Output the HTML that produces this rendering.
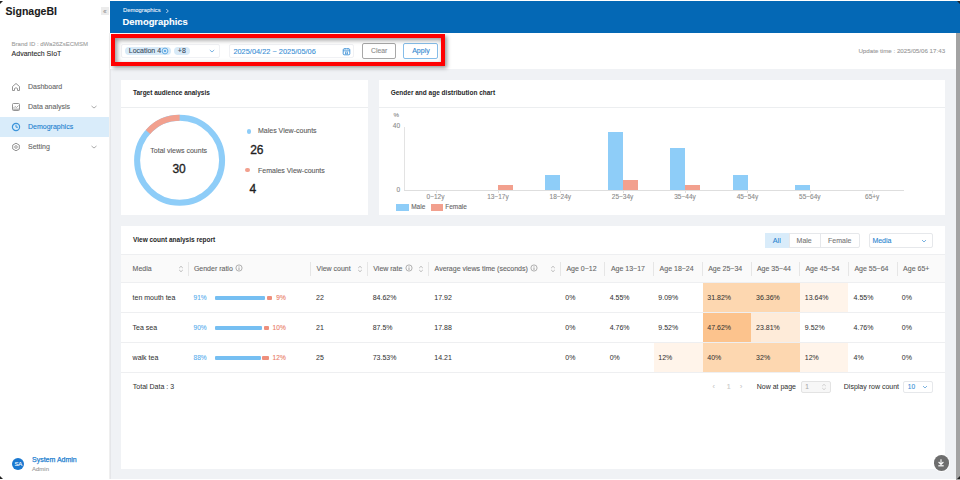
<!DOCTYPE html>
<html><head><meta charset="utf-8">
<style>
*{margin:0;padding:0;box-sizing:border-box}
html,body{width:960px;height:480px;overflow:hidden;background:#fff;font-family:"Liberation Sans",sans-serif}
.a{position:absolute}
.t{position:absolute;line-height:1;white-space:nowrap;-webkit-text-stroke-width:0.1px}
#side{left:0;top:0;width:110px;height:480px;background:#fff}
#hdr{left:110px;top:1px;width:850px;height:32px;background:#0468b5}
#filt{left:110px;top:33px;width:846px;height:36px;background:#fff}
#main{left:110px;top:69px;width:846px;height:410px;background:#f0f2f5}
#sb{left:956px;top:33px;width:4px;height:447px;background:#a3a3a3}
.card{position:absolute;background:#fff}
.hd{position:absolute;left:0;right:0;height:1px;background:#eceef0}
.ttl{font-size:6.5px;font-weight:bold;color:#262626;-webkit-text-stroke-width:0 !important}
.nav{font-size:7px;color:#666}
.g7{font-size:7px;color:#595959}
.th{font-size:7px;color:#666}
.td{font-size:7px;color:#333;-webkit-text-stroke-width:0.04px !important}
.line{position:absolute;height:1px;background:#eeeff1}
.vd{position:absolute;width:1px;background:#e8e8e8}
</style></head><body>

<!-- sidebar -->
<div id="side" class="a"></div>
<div class="a" style="left:109px;top:33px;width:1px;height:446px;background:#e6e7ea"></div>
<div class="t" style="left:5.6px;top:5.5px;font-size:10.5px;font-weight:bold;color:#1a1a1a">SignageBI</div>
<div class="a" style="left:101px;top:7px;width:8px;height:8px;background:#ececec"></div>
<div class="t" style="left:103px;top:7.5px;font-size:7px;color:#9a9a9a;letter-spacing:-1px">&lsaquo;&lsaquo;</div>
<div class="t" style="left:11.6px;top:40.6px;font-size:6px;color:#a0a0a0">Brand ID : dWa26ZsECMSM</div>
<div class="t" style="left:11.6px;top:49.9px;font-size:7px;color:#2a2a2a">Advantech SIoT</div>

<div class="a" style="left:0;top:117px;width:109px;height:20px;background:#d9ecfa"></div>
<div class="t nav" style="left:28px;top:83.2px">Dashboard</div>
<div class="t nav" style="left:28px;top:103.2px">Data analysis</div>
<div class="t nav" style="left:28px;top:123.2px;color:#2180cf">Demographics</div>
<div class="t nav" style="left:28px;top:143.2px">Setting</div>
<!-- icons -->
<svg class="a" style="left:11px;top:82px" width="10" height="10" viewBox="0 0 10 10"><path d="M1.5 8.5 V4.5 L5 1.5 L8.5 4.5 V8.5 H6.5 V6.5 Q5 5 3.5 6.5 V8.5 Z" fill="none" stroke="#8a8a8a" stroke-width="0.9" stroke-linejoin="round"/></svg>
<svg class="a" style="left:11px;top:102px" width="10" height="10" viewBox="0 0 10 10"><rect x="1.5" y="1.5" width="7" height="7" rx="1" fill="none" stroke="#888" stroke-width="0.9"/><path d="M2.5 6 L4 4.5 L5.5 5.5 L7.5 3.5" fill="none" stroke="#888" stroke-width="0.7"/><rect x="2" y="6.5" width="6" height="1.5" fill="#bbb"/></svg>
<svg class="a" style="left:11px;top:122px" width="10" height="10" viewBox="0 0 10 10"><circle cx="5" cy="5" r="3.6" fill="none" stroke="#3d95da" stroke-width="1.2"/><path d="M5 2.8 V5.2 H7" fill="none" stroke="#3d95da" stroke-width="1"/></svg>
<svg class="a" style="left:11px;top:142px" width="10" height="10" viewBox="0 0 10 10"><path d="M5 1.2 L8.3 3.1 V6.9 L5 8.8 L1.7 6.9 V3.1 Z" fill="none" stroke="#888" stroke-width="0.9" stroke-linejoin="round"/><circle cx="5" cy="5" r="1.3" fill="none" stroke="#888" stroke-width="0.8"/></svg>
<svg class="a" style="left:90px;top:104px" width="8" height="6" viewBox="0 0 8 6"><path d="M1.5 2 L4 4 L6.5 2" fill="none" stroke="#888" stroke-width="0.7"/></svg>
<svg class="a" style="left:90px;top:144px" width="8" height="6" viewBox="0 0 8 6"><path d="M1.5 2 L4 4 L6.5 2" fill="none" stroke="#888" stroke-width="0.7"/></svg>

<div class="a" style="left:12px;top:458px;width:12.4px;height:12.4px;border-radius:50%;background:#1a78d0"></div>
<div class="t" style="left:12px;top:461.3px;width:12.4px;text-align:center;font-size:6px;color:#fff;letter-spacing:-0.4px">SA</div>
<div class="t" style="left:32px;top:455.8px;font-size:7px;color:#1f7fd0;-webkit-text-stroke-width:0.25px">System Admin</div>
<div class="t" style="left:32px;top:465.8px;font-size:6px;color:#999">Admin</div>

<!-- header -->
<div id="hdr" class="a"></div>
<div class="t" style="left:123px;top:7.6px;font-size:5.85px;color:#e8f1fa">Demographics</div>
<svg class="a" style="left:165px;top:8px" width="5" height="6" viewBox="0 0 5 6"><path d="M1.3 1 L3.3 3 L1.3 5" fill="none" stroke="#e8f1fa" stroke-width="0.8"/></svg>
<div class="t" style="left:122.6px;top:17.4px;font-size:9.4px;font-weight:bold;color:#fff">Demographics</div>

<div id="filt" class="a"></div>
<div id="main" class="a"></div>
<div id="sb" class="a"></div>
<div class="a" style="left:109px;top:33px;width:1px;height:446px;background:#efefef"></div>
<div class="a" style="left:110px;top:69px;width:1px;height:410px;background:#e5e6e9"></div>
<div class="a" style="left:0;top:1px;width:3px;height:3px;background:#222;clip-path:polygon(0 0,100% 0,0 100%)"></div>
<div class="a" style="left:957px;top:1px;width:3px;height:3px;background:#222;clip-path:polygon(0 0,100% 0,100% 100%)"></div>
<div class="a" style="left:0;top:476px;width:3px;height:3px;background:#222;clip-path:polygon(0 0,0 100%,100% 100%)"></div>
<div class="a" style="left:957px;top:476px;width:3px;height:3px;background:#222;clip-path:polygon(100% 0,100% 100%,0 100%)"></div>


<!-- filter bar -->
<div class="t" style="left:858.4px;top:48px;font-size:6.2px;color:#999">Update time : 2025/05/06 17:43</div>
<div class="a" style="left:121px;top:44px;width:99px;height:14px;border:1px solid #f0f1f4;border-radius:2px;background:#fff"></div>
<div class="a" style="left:125px;top:47px;width:46px;height:8px;border-radius:4px;background:#d8eaf8"></div>
<div class="t" style="left:128.8px;top:47.3px;font-size:7px;color:#3a4a5c">Location 4</div>
<svg class="a" style="left:161px;top:47px" width="8" height="8" viewBox="0 0 8 8"><circle cx="4" cy="4" r="2.9" fill="none" stroke="#4a9ee0" stroke-width="0.8"/><circle cx="4" cy="4" r="1.1" fill="#4a9ee0"/></svg>
<div class="a" style="left:174px;top:47px;width:15.5px;height:8px;border-radius:4px;background:#d8eaf8"></div>
<div class="t" style="left:177.8px;top:47.3px;font-size:7px;color:#3a4a5c">+8</div>
<svg class="a" style="left:208px;top:48px" width="8" height="6" viewBox="0 0 8 6"><path d="M1.8 2 L4 4 L6.2 2" fill="none" stroke="#5a9fd8" stroke-width="0.8"/></svg>
<div class="a" style="left:229px;top:44px;width:125px;height:14px;border:1px solid #f0f1f4;border-radius:2px;background:#fff"></div>
<div class="t" style="left:233.4px;top:47.8px;font-size:7.4px;color:#3a8fd6">2025/04/22 ~ 2025/05/06</div>
<svg class="a" style="left:342px;top:46.5px" width="9" height="9" viewBox="0 0 9 9"><rect x="1.2" y="1.8" width="6.6" height="6" rx="1" fill="none" stroke="#3a8fd6" stroke-width="0.9"/><path d="M1.2 3.8 H7.8 M3 1 V2.5 M6 1 V2.5" stroke="#3a8fd6" stroke-width="0.8"/><rect x="3.3" y="5" width="2.4" height="1.8" fill="none" stroke="#3a8fd6" stroke-width="0.6"/></svg>
<div class="a" style="left:362.3px;top:43.3px;width:33.6px;height:15.4px;border:1px solid #a8a8a8;border-radius:2px;background:#fff"></div>
<div class="t" style="left:371px;top:48px;font-size:6.8px;color:#8a8a8a">Clear</div>
<div class="a" style="left:403.3px;top:43.3px;width:35.2px;height:15.4px;border:1px solid #86bde9;border-radius:2px;background:#fff"></div>
<div class="t" style="left:412.2px;top:47.3px;font-size:7px;color:#2d86cf">Apply</div>
<!-- red highlight box -->
<div class="a" style="left:111px;top:34px;width:334px;height:32px;border:4px solid #ff0000;box-shadow:2px 2px 4px rgba(0,0,0,0.4), inset 2px 2px 5px rgba(0,0,0,0.42)"></div>

<!-- card 1 -->
<div class="card" style="left:121px;top:80px;width:247px;height:135px"></div>
<div class="hd" style="left:121px;top:107px;width:247px;right:auto"></div>
<div class="t ttl" style="left:133px;top:90.4px">Target audience analysis</div>
<svg class="a" style="left:129px;top:110px" width="102" height="102" viewBox="0 0 102 102">
<circle cx="50.6" cy="50.3" r="42.5" fill="none" stroke="#8ecdf8" stroke-width="6"/>
<path d="M50.6 7.8 A42.5 42.5 0 0 0 19 21.9" fill="none" stroke="#f2a08e" stroke-width="6"/>
</svg>
<div class="t" style="left:150.3px;top:147px;font-size:7px;color:#5a5a5a">Total views counts</div>
<div class="t" style="left:172.4px;top:163px;font-size:12px;color:#1f1f1f;-webkit-text-stroke:0.35px #1f1f1f">30</div>
<div class="a" style="left:246.9px;top:129px;width:4.6px;height:4.6px;border-radius:50%;background:#8ecdf8"></div>
<div class="t" style="left:258px;top:127.4px;font-size:7px;color:#5a5a5a">Males View-counts</div>
<div class="t" style="left:250.2px;top:144px;font-size:12px;color:#1f1f1f;-webkit-text-stroke:0.35px #1f1f1f">26</div>
<div class="a" style="left:245px;top:167.6px;width:4.8px;height:4.8px;border-radius:50%;background:#f2a08e"></div>
<div class="t" style="left:258px;top:166.6px;font-size:7px;color:#5a5a5a">Females View-counts</div>
<div class="t" style="left:249.6px;top:183px;font-size:12px;color:#1f1f1f;-webkit-text-stroke:0.35px #1f1f1f">4</div>

<!-- card 2 -->
<div class="card" style="left:379px;top:80px;width:566px;height:135px"></div>
<div class="hd" style="left:379px;top:107px;width:566px;right:auto"></div>
<div class="t ttl" style="left:390.7px;top:90.4px">Gender and age distribution chart</div>
<div class="t" style="left:393.6px;top:112.4px;font-size:6.2px;color:#8a8a8a">%</div>
<div class="t" style="left:392.8px;top:123px;font-size:6.5px;color:#8a8a8a">40</div>
<div class="t" style="left:396.6px;top:187px;font-size:6.5px;color:#8a8a8a">0</div>
<div class="a" style="left:404px;top:126.5px;width:1px;height:64px;background:#e3e3e3"></div>
<div class="a" style="left:404px;top:190px;width:500px;height:1px;background:#dedede"></div>
<div class="a" style="left:545.4px;top:174.8px;width:15px;height:15.5px;background:#8ecdf8"></div>
<div class="a" style="left:607.8px;top:132.3px;width:15px;height:58.0px;background:#8ecdf8"></div>
<div class="a" style="left:670.1px;top:148.1px;width:15px;height:42.2px;background:#8ecdf8"></div>
<div class="a" style="left:732.9px;top:174.8px;width:15px;height:15.5px;background:#8ecdf8"></div>
<div class="a" style="left:795.2px;top:185.3px;width:15px;height:5.0px;background:#8ecdf8"></div>
<div class="a" style="left:498.3px;top:185.3px;width:15px;height:5.0px;background:#f2a08e"></div>
<div class="a" style="left:622.6px;top:180.0px;width:15px;height:10.3px;background:#f2a08e"></div>
<div class="a" style="left:685.0px;top:185.3px;width:15px;height:5.0px;background:#f2a08e"></div>
<div class="t" style="left:405.5px;top:194px;width:60px;text-align:center;font-size:6.5px;color:#8a8a8a">0~12y</div>
<div class="a" style="left:435.5px;top:190.5px;width:1px;height:2px;background:#e0e0e0"></div>
<div class="t" style="left:467.9px;top:194px;width:60px;text-align:center;font-size:6.5px;color:#8a8a8a">13~17y</div>
<div class="a" style="left:497.9px;top:190.5px;width:1px;height:2px;background:#e0e0e0"></div>
<div class="t" style="left:530.3px;top:194px;width:60px;text-align:center;font-size:6.5px;color:#8a8a8a">18~24y</div>
<div class="a" style="left:560.3px;top:190.5px;width:1px;height:2px;background:#e0e0e0"></div>
<div class="t" style="left:592.6px;top:194px;width:60px;text-align:center;font-size:6.5px;color:#8a8a8a">25~34y</div>
<div class="a" style="left:622.6px;top:190.5px;width:1px;height:2px;background:#e0e0e0"></div>
<div class="t" style="left:655.0px;top:194px;width:60px;text-align:center;font-size:6.5px;color:#8a8a8a">35~44y</div>
<div class="a" style="left:685.0px;top:190.5px;width:1px;height:2px;background:#e0e0e0"></div>
<div class="t" style="left:717.4px;top:194px;width:60px;text-align:center;font-size:6.5px;color:#8a8a8a">45~54y</div>
<div class="a" style="left:747.4px;top:190.5px;width:1px;height:2px;background:#e0e0e0"></div>
<div class="t" style="left:779.8px;top:194px;width:60px;text-align:center;font-size:6.5px;color:#8a8a8a">55~64y</div>
<div class="a" style="left:809.8px;top:190.5px;width:1px;height:2px;background:#e0e0e0"></div>
<div class="t" style="left:842.2px;top:194px;width:60px;text-align:center;font-size:6.5px;color:#8a8a8a">65+y</div>
<div class="a" style="left:872.2px;top:190.5px;width:1px;height:2px;background:#e0e0e0"></div>
<div class="a" style="left:396px;top:204.2px;width:13px;height:6.5px;background:#8ecdf8"></div>
<div class="t" style="left:411.2px;top:203.5px;font-size:6.5px;color:#666">Male</div>
<div class="a" style="left:430.5px;top:204.2px;width:12.5px;height:6.5px;background:#f2a08e"></div>
<div class="t" style="left:445.2px;top:203.5px;font-size:6.5px;color:#666">Female</div>
<!-- table card -->
<div class="card" style="left:121px;top:226px;width:824px;height:243px"></div>
<div class="t ttl" style="left:133px;top:237px">View count analysis report</div>
<div class="a" style="left:764.8px;top:232.8px;width:94.8px;height:15.4px;border:1px solid #e6e8eb;border-radius:2px;background:#fff"></div>
<div class="a" style="left:765.3px;top:233.3px;width:23.6px;height:14.4px;background:#d9ecfa"></div>
<div class="a" style="left:788.9px;top:233px;width:1px;height:15px;background:#e6e8eb"></div>
<div class="a" style="left:820.3px;top:233px;width:1px;height:15px;background:#e6e8eb"></div>
<div class="t" style="left:772.8px;top:237px;font-size:7.2px;color:#2a85d0">All</div>
<div class="t" style="left:796.6px;top:237px;font-size:7px;color:#777">Male</div>
<div class="t" style="left:828px;top:237px;font-size:7px;color:#777">Female</div>
<div class="a" style="left:868.5px;top:232.8px;width:64.5px;height:15.4px;border:1px solid #e6e8eb;border-radius:2px;background:#fff"></div>
<div class="t" style="left:872.4px;top:237px;font-size:7px;color:#2a85d0">Media</div>
<svg class="a" style="left:920px;top:237.5px" width="8" height="6" viewBox="0 0 8 6"><path d="M2 2 L4 4 L6 2" fill="none" stroke="#5a9fd8" stroke-width="0.8"/></svg>
<div class="a" style="left:121px;top:254px;width:824px;height:29px;background:#fafafa;border-top:1px solid #eeeff1;border-bottom:1px solid #eeeff1"></div>
<div class="a" style="left:187.5px;top:262px;width:1px;height:14px;background:#e6e6e6"></div>
<div class="a" style="left:310.3px;top:262px;width:1px;height:14px;background:#e6e6e6"></div>
<div class="a" style="left:366.7px;top:262px;width:1px;height:14px;background:#e6e6e6"></div>
<div class="a" style="left:428.2px;top:262px;width:1px;height:14px;background:#e6e6e6"></div>
<div class="a" style="left:559.8px;top:262px;width:1px;height:14px;background:#e6e6e6"></div>
<div class="a" style="left:604.2px;top:262px;width:1px;height:14px;background:#e6e6e6"></div>
<div class="a" style="left:653.0px;top:262px;width:1px;height:14px;background:#e6e6e6"></div>
<div class="a" style="left:702.0px;top:262px;width:1px;height:14px;background:#e6e6e6"></div>
<div class="a" style="left:750.5px;top:262px;width:1px;height:14px;background:#e6e6e6"></div>
<div class="a" style="left:799.1px;top:262px;width:1px;height:14px;background:#e6e6e6"></div>
<div class="a" style="left:848.0px;top:262px;width:1px;height:14px;background:#e6e6e6"></div>
<div class="a" style="left:897.0px;top:262px;width:1px;height:14px;background:#e6e6e6"></div>
<div class="t th" style="left:132.6px;top:265px">Media</div>
<div class="t th" style="left:193.9px;top:265px">Gender ratio</div>
<div class="t th" style="left:316.6px;top:265px">View count</div>
<div class="t th" style="left:373.3px;top:265px">View rate</div>
<div class="t th" style="left:434.6px;top:265px">Average views time (seconds)</div>
<div class="t th" style="left:566.4px;top:265px">Age 0~12</div>
<div class="t th" style="left:610.9px;top:265px">Age 13~17</div>
<div class="t th" style="left:659.6px;top:265px">Age 18~24</div>
<div class="t th" style="left:708.2px;top:265px">Age 25~34</div>
<div class="t th" style="left:756.9px;top:265px">Age 35~44</div>
<div class="t th" style="left:805.4px;top:265px">Age 45~54</div>
<div class="t th" style="left:854.4px;top:265px">Age 55~64</div>
<div class="t th" style="left:903.1px;top:265px">Age 65+</div>
<svg class="a" style="left:177.7px;top:265px" width="6" height="8" viewBox="0 0 6 8"><path d="M1.2 3 L3 1.3 L4.8 3 M1.2 5 L3 6.7 L4.8 5" fill="none" stroke="#a0a0a0" stroke-width="0.7"/></svg>
<svg class="a" style="left:356.6px;top:265px" width="6" height="8" viewBox="0 0 6 8"><path d="M1.2 3 L3 1.3 L4.8 3 M1.2 5 L3 6.7 L4.8 5" fill="none" stroke="#a0a0a0" stroke-width="0.7"/></svg>
<svg class="a" style="left:418.0px;top:265px" width="6" height="8" viewBox="0 0 6 8"><path d="M1.2 3 L3 1.3 L4.8 3 M1.2 5 L3 6.7 L4.8 5" fill="none" stroke="#a0a0a0" stroke-width="0.7"/></svg>
<svg class="a" style="left:549.6px;top:265px" width="6" height="8" viewBox="0 0 6 8"><path d="M1.2 3 L3 1.3 L4.8 3 M1.2 5 L3 6.7 L4.8 5" fill="none" stroke="#a0a0a0" stroke-width="0.7"/></svg>
<svg class="a" style="left:234.7px;top:264px" width="8" height="8" viewBox="0 0 8 8"><circle cx="4" cy="4" r="3.1" fill="none" stroke="#808080" stroke-width="0.6"/><path d="M4 3.4 V6" stroke="#808080" stroke-width="0.7"/><circle cx="4" cy="2.4" r="0.45" fill="#808080"/></svg>
<svg class="a" style="left:404.8px;top:264px" width="8" height="8" viewBox="0 0 8 8"><circle cx="4" cy="4" r="3.1" fill="none" stroke="#808080" stroke-width="0.6"/><path d="M4 3.4 V6" stroke="#808080" stroke-width="0.7"/><circle cx="4" cy="2.4" r="0.45" fill="#808080"/></svg>
<svg class="a" style="left:530.3px;top:264px" width="8" height="8" viewBox="0 0 8 8"><circle cx="4" cy="4" r="3.1" fill="none" stroke="#808080" stroke-width="0.6"/><path d="M4 3.4 V6" stroke="#808080" stroke-width="0.7"/><circle cx="4" cy="2.4" r="0.45" fill="#808080"/></svg>
<div class="a" style="left:702.5px;top:283px;width:48.5px;height:29px;background:#fdd7b0"></div>
<div class="a" style="left:751.0px;top:283px;width:48.6px;height:29px;background:#fdd7b0"></div>
<div class="a" style="left:799.6px;top:283px;width:48.9px;height:29px;background:#fff4ea"></div>
<div class="a" style="left:121px;top:312px;width:824px;height:1px;background:#eeeff1"></div>
<div class="t td" style="left:132.6px;top:294px">ten mouth tea</div>
<div class="t" style="left:193.5px;top:295px;font-size:6.6px;color:#5bb0ee">91%</div>
<div class="a" style="left:215.4px;top:295.5px;width:50.0px;height:4px;border-radius:1px;background:#76bff2"></div>
<div class="a" style="left:266.8px;top:295.5px;width:5.7px;height:4px;border-radius:1px;background:#ee8f7c"></div>
<div class="t" style="left:245.8px;top:295px;width:40px;text-align:right;font-size:6.6px;color:#ea7d68">9%</div>
<div class="t td" style="left:316.1px;top:294px">22</div>
<div class="t td" style="left:372.7px;top:294px">84.62%</div>
<div class="t td" style="left:434.3px;top:294px">17.92</div>
<div class="t td" style="left:565.3px;top:294px">0%</div>
<div class="t td" style="left:609.7px;top:294px">4.55%</div>
<div class="t td" style="left:658.3px;top:294px">9.09%</div>
<div class="t td" style="left:707.3px;top:294px">31.82%</div>
<div class="t td" style="left:756.1px;top:294px">36.36%</div>
<div class="t td" style="left:804.8px;top:294px">13.64%</div>
<div class="t td" style="left:853.6px;top:294px">4.55%</div>
<div class="t td" style="left:901.8px;top:294px">0%</div>
<div class="a" style="left:702.5px;top:313px;width:48.5px;height:29px;background:#fcc38d"></div>
<div class="a" style="left:751.0px;top:313px;width:48.6px;height:29px;background:#feebd9"></div>
<div class="a" style="left:121px;top:342px;width:824px;height:1px;background:#eeeff1"></div>
<div class="t td" style="left:132.6px;top:324px">Tea sea</div>
<div class="t" style="left:193.5px;top:325px;font-size:6.6px;color:#5bb0ee">90%</div>
<div class="a" style="left:215.4px;top:325.5px;width:46.6px;height:4px;border-radius:1px;background:#76bff2"></div>
<div class="a" style="left:263.7px;top:325.5px;width:5.2px;height:4px;border-radius:1px;background:#ee8f7c"></div>
<div class="t" style="left:245.8px;top:325px;width:40px;text-align:right;font-size:6.6px;color:#ea7d68">10%</div>
<div class="t td" style="left:316.1px;top:324px">21</div>
<div class="t td" style="left:372.7px;top:324px">87.5%</div>
<div class="t td" style="left:434.3px;top:324px">17.88</div>
<div class="t td" style="left:565.3px;top:324px">0%</div>
<div class="t td" style="left:609.7px;top:324px">4.76%</div>
<div class="t td" style="left:658.3px;top:324px">9.52%</div>
<div class="t td" style="left:707.3px;top:324px">47.62%</div>
<div class="t td" style="left:756.1px;top:324px">23.81%</div>
<div class="t td" style="left:804.8px;top:324px">9.52%</div>
<div class="t td" style="left:853.6px;top:324px">4.76%</div>
<div class="t td" style="left:901.8px;top:324px">0%</div>
<div class="a" style="left:653.5px;top:343px;width:49.0px;height:29px;background:#fff4ea"></div>
<div class="a" style="left:702.5px;top:343px;width:48.5px;height:29px;background:#fdd7b0"></div>
<div class="a" style="left:751.0px;top:343px;width:48.6px;height:29px;background:#fdd7b0"></div>
<div class="a" style="left:799.6px;top:343px;width:48.9px;height:29px;background:#fff4ea"></div>
<div class="a" style="left:121px;top:372px;width:824px;height:1px;background:#eeeff1"></div>
<div class="t td" style="left:132.6px;top:354px">walk tea</div>
<div class="t" style="left:193.5px;top:355px;font-size:6.6px;color:#5bb0ee">88%</div>
<div class="a" style="left:215.4px;top:355.5px;width:45.2px;height:4px;border-radius:1px;background:#76bff2"></div>
<div class="a" style="left:262.0px;top:355.5px;width:6.9px;height:4px;border-radius:1px;background:#ee8f7c"></div>
<div class="t" style="left:245.8px;top:355px;width:40px;text-align:right;font-size:6.6px;color:#ea7d68">12%</div>
<div class="t td" style="left:316.1px;top:354px">25</div>
<div class="t td" style="left:372.7px;top:354px">73.53%</div>
<div class="t td" style="left:434.3px;top:354px">14.21</div>
<div class="t td" style="left:565.3px;top:354px">0%</div>
<div class="t td" style="left:609.7px;top:354px">0%</div>
<div class="t td" style="left:658.3px;top:354px">12%</div>
<div class="t td" style="left:707.3px;top:354px">40%</div>
<div class="t td" style="left:756.1px;top:354px">32%</div>
<div class="t td" style="left:804.8px;top:354px">12%</div>
<div class="t td" style="left:853.6px;top:354px">4%</div>
<div class="t td" style="left:901.8px;top:354px">0%</div>
<div class="t td" style="left:132.8px;top:383px">Total Data : 3</div>
<div class="t" style="left:712.6px;top:383.4px;font-size:7px;color:#c8c8c8">&lsaquo;</div>
<div class="t" style="left:726.8px;top:382.6px;font-size:7px;color:#c8c8c8">1</div>
<div class="t" style="left:740px;top:383.4px;font-size:7px;color:#c8c8c8">&rsaquo;</div>
<div class="t td" style="left:756.7px;top:383px">Now at page</div>
<div class="a" style="left:800.5px;top:381.4px;width:30.7px;height:11.8px;border:1px solid #e3e3e3;border-radius:2px;background:#f7f7f7"></div>
<div class="t" style="left:805.2px;top:384px;font-size:6.5px;color:#aaa">1</div>
<svg class="a" style="left:820.5px;top:383px" width="6" height="8" viewBox="0 0 6 8"><path d="M1.2 3 L3 1.3 L4.8 3 M1.2 5 L3 6.7 L4.8 5" fill="none" stroke="#c0c0c0" stroke-width="0.7"/></svg>
<div class="t td" style="left:843.8px;top:383px">Display row count</div>
<div class="a" style="left:903.4px;top:381.2px;width:29.8px;height:12px;border:1px solid #e6e8eb;border-radius:2px;background:#fff"></div>
<div class="t" style="left:907.8px;top:383.5px;font-size:6.5px;color:#3a8fd6">10</div>
<svg class="a" style="left:920.7px;top:384px" width="8" height="6" viewBox="0 0 8 6"><path d="M2 2 L4 4 L6 2" fill="none" stroke="#5a9fd8" stroke-width="0.8"/></svg>
<div class="a" style="left:932.6px;top:454px;width:17.6px;height:17.6px;border-radius:50%;background:#fff;opacity:0.7"></div>
<div class="a" style="left:933.6px;top:455px;width:15.6px;height:15.6px;border-radius:50%;background:#6e6e6e"></div>
<svg class="a" style="left:935.4px;top:456.8px" width="12" height="12" viewBox="0 0 12 12"><path d="M6 2.3 V7.2 M3.6 5 L6 7.4 L8.4 5" fill="none" stroke="#fff" stroke-width="1.1"/><rect x="3.3" y="8.2" width="5.4" height="1.2" fill="#fff"/></svg>
</body></html>
